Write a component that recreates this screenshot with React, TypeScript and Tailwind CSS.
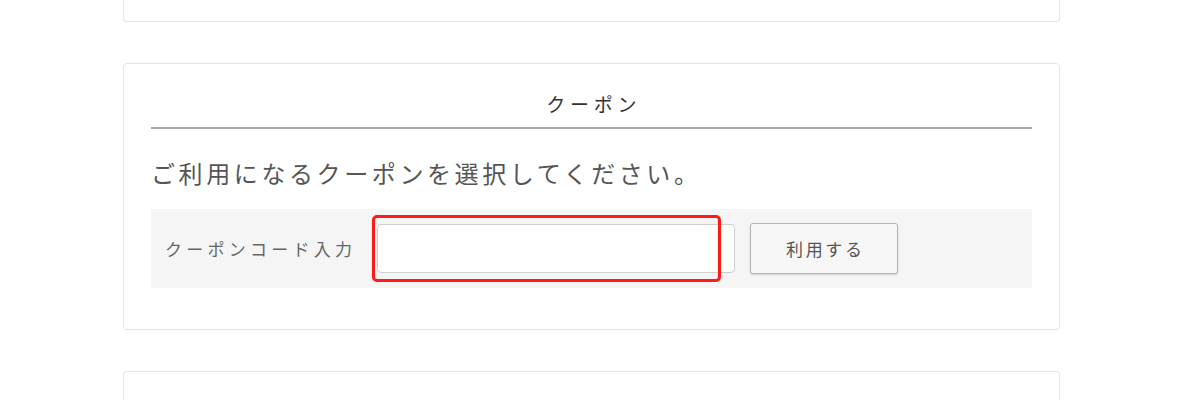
const FONT = "font-['Noto_Sans_CJK_JP','Noto_Sans',sans-serif]";

function CouponCard() {
  return (
    <div className="bg-white border border-[#e3e3e3] rounded-[4px] px-[27px] pb-[41px]">
      {/* heading */}
      <div className="h-[65px] flex items-end justify-center pb-[11px] border-b-2 border-[#a8a8a8]">
        <h2 className="text-[19px] leading-[24px] tracking-[0.25em] text-[#333] pl-[0.25em]">クーポン</h2>
      </div>
      <p className="mt-[28px] text-[24px] leading-[32px] tracking-[0.15em] text-[#555]">
        ご利用になるクーポンを選択してください。
      </p>
      {/* coupon code row */}
      <div className="mt-[20px] h-[79px] bg-[#f5f5f5] flex items-center pl-[14px]">
        <span className="w-[212px] shrink-0 text-[17px] tracking-[0.25em] text-[#666]">クーポンコード入力</span>
        <div className="relative">
          <input
            type="text"
            className="block w-[358px] h-[49px] bg-white border border-[#cfcfcf] rounded-[4px] outline-none px-3"
          />
          <div className="absolute -left-[5px] -top-[9px] w-[349px] h-[67px] border-[3px] border-[#ff1a1a] rounded-[5px] pointer-events-none" />
        </div>
        <button className="ml-[15px] w-[148px] h-[51px] bg-[#f7f7f7] border border-[#b5b5b5] rounded-[3px] shadow-[0_1px_2px_rgba(0,0,0,0.15)] text-[17px] tracking-[0.16em] pl-[0.16em] text-[#555]">
          利用する
        </button>
      </div>
    </div>
  );
}

export default function App() {
  return (
    <div className={`w-[1200px] h-[400px] bg-white overflow-hidden ${FONT}`}>
      <div className="ml-[123px] w-[937px] flex flex-col gap-[41px]">
        <div className="h-[22px] bg-white border border-t-0 border-[#e3e3e3] rounded-b-[4px]" />
        <CouponCard />
        <div className="h-[60px] bg-white border border-b-0 border-[#e3e3e3] rounded-t-[4px]" />
      </div>
    </div>
  );
}
